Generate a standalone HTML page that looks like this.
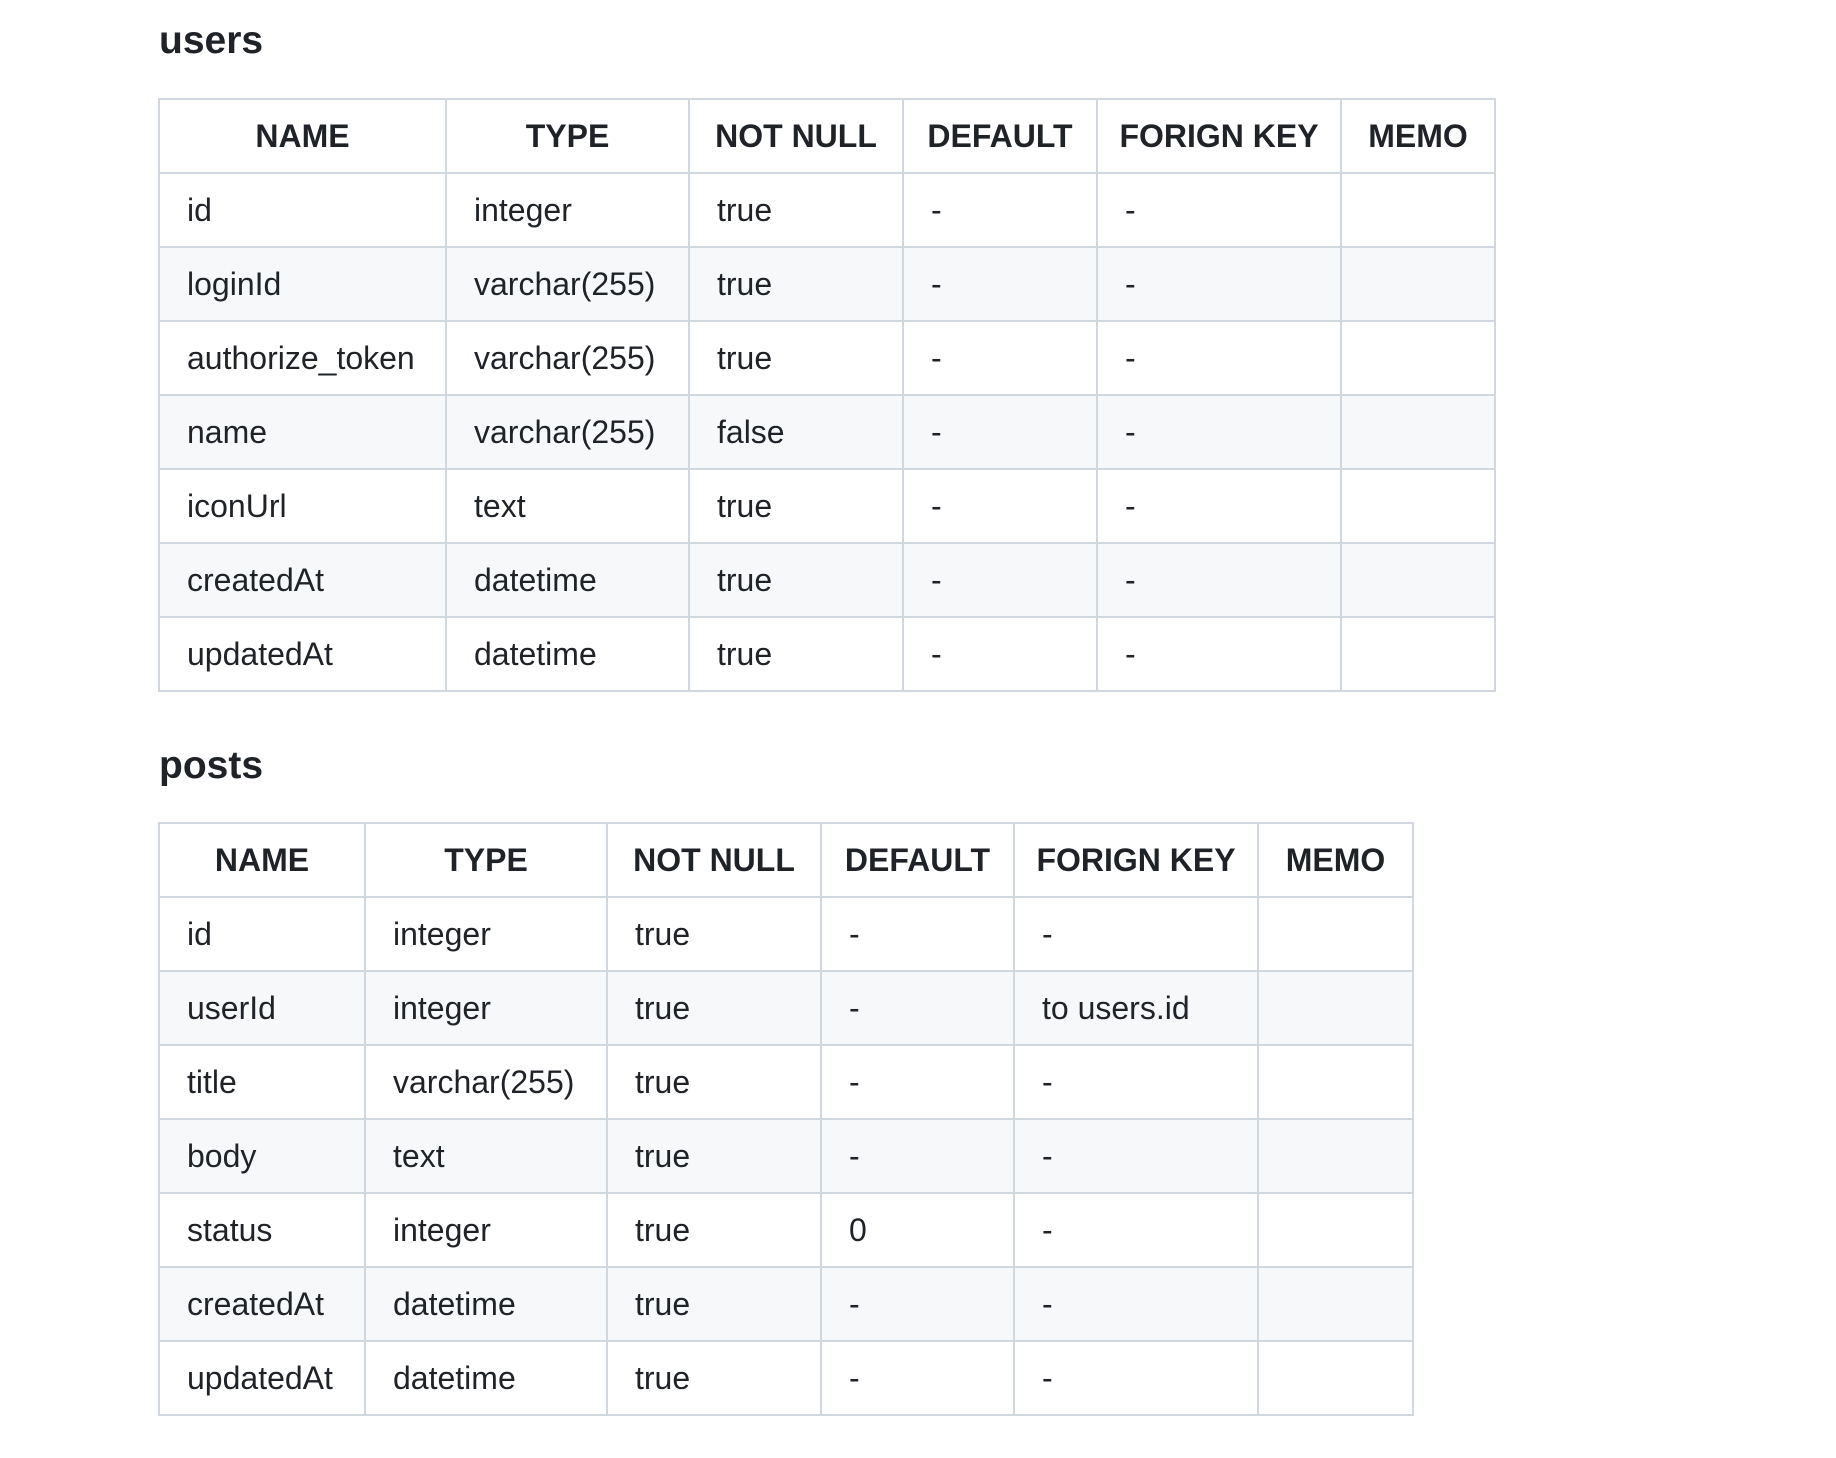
<!DOCTYPE html>
<html><head><meta charset="utf-8"><style>
html,body{margin:0;padding:0;background:#fff;width:1836px;height:1458px;overflow:hidden}
body{font-family:"Liberation Sans",sans-serif;color:#1f2328;position:relative}
h2{position:absolute;left:159px;margin:0;font-size:39px;font-weight:bold;line-height:48px}
table{position:absolute;left:158px;border-collapse:collapse;table-layout:fixed;font-size:32px}
td,th{border:2px solid #d0d7de;height:74px;padding:0 0 0 27px;text-align:left;box-sizing:border-box;white-space:nowrap}
th{text-align:center;padding:0;font-weight:bold}
tr:nth-child(odd) td{background:#f6f8fa}
tr:first-child th{background:#fff}
</style></head><body>
<h2 style="top:17px">users</h2>
<table style="top:98px">
<colgroup><col style="width:287px"><col style="width:243px"><col style="width:214px"><col style="width:194px"><col style="width:244px"><col style="width:154px"></colgroup>
<tr><th>NAME</th><th>TYPE</th><th>NOT NULL</th><th>DEFAULT</th><th>FORIGN KEY</th><th>MEMO</th></tr>
<tr><td>id</td><td>integer</td><td>true</td><td>-</td><td>-</td><td></td></tr>
<tr><td>loginId</td><td>varchar(255)</td><td>true</td><td>-</td><td>-</td><td></td></tr>
<tr><td>authorize_token</td><td>varchar(255)</td><td>true</td><td>-</td><td>-</td><td></td></tr>
<tr><td>name</td><td>varchar(255)</td><td>false</td><td>-</td><td>-</td><td></td></tr>
<tr><td>iconUrl</td><td>text</td><td>true</td><td>-</td><td>-</td><td></td></tr>
<tr><td>createdAt</td><td>datetime</td><td>true</td><td>-</td><td>-</td><td></td></tr>
<tr><td>updatedAt</td><td>datetime</td><td>true</td><td>-</td><td>-</td><td></td></tr>
</table>
<h2 style="top:742px">posts</h2>
<table style="top:822px">
<colgroup><col style="width:206px"><col style="width:242px"><col style="width:214px"><col style="width:193px"><col style="width:244px"><col style="width:155px"></colgroup>
<tr><th>NAME</th><th>TYPE</th><th>NOT NULL</th><th>DEFAULT</th><th>FORIGN KEY</th><th>MEMO</th></tr>
<tr><td>id</td><td>integer</td><td>true</td><td>-</td><td>-</td><td></td></tr>
<tr><td>userId</td><td>integer</td><td>true</td><td>-</td><td>to users.id</td><td></td></tr>
<tr><td>title</td><td>varchar(255)</td><td>true</td><td>-</td><td>-</td><td></td></tr>
<tr><td>body</td><td>text</td><td>true</td><td>-</td><td>-</td><td></td></tr>
<tr><td>status</td><td>integer</td><td>true</td><td>0</td><td>-</td><td></td></tr>
<tr><td>createdAt</td><td>datetime</td><td>true</td><td>-</td><td>-</td><td></td></tr>
<tr><td>updatedAt</td><td>datetime</td><td>true</td><td>-</td><td>-</td><td></td></tr>
</table>
</body></html>
